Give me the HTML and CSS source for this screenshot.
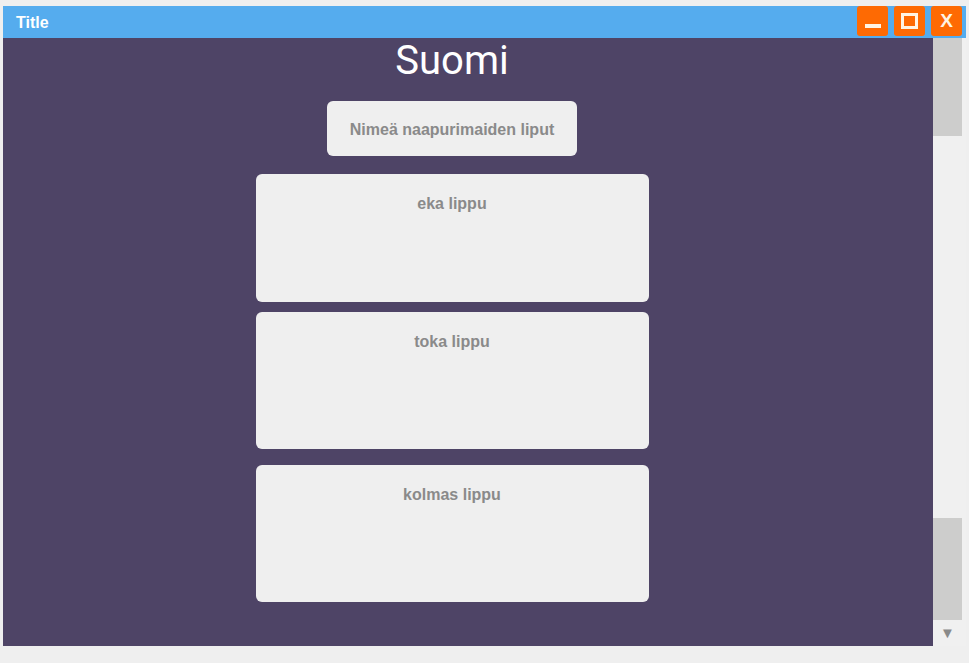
FILE: index.html
```html
<!DOCTYPE html>
<html lang="fi">
<head>
<meta charset="utf-8">
<title>Title</title>
<link rel="stylesheet" href="styles.css">
</head>
<body>
<div class="window">
  <div class="titlebar">
    <span class="title">Title</span>
    <div class="controls">
      <div class="ctl"><span class="min-bar"></span></div>
      <div class="ctl"><span class="max-box"></span></div>
      <div class="ctl"><span class="close-x">X</span></div>
    </div>
  </div>
  <div class="body">
    <div class="content">
      <h1 class="heading">Suomi</h1>
      <div class="prompt">Nimeä naapurimaiden liput</div>
      <div class="card card-a">eka lippu</div>
      <div class="card card-b">toka lippu</div>
      <div class="card card-c">kolmas lippu</div>
    </div>
    <div class="scrollbar">
      <div class="thumb thumb-top"></div>
      <div class="track-gap"></div>
      <div class="thumb thumb-bottom"></div>
      <div class="arrow">▼</div>
    </div>
  </div>
</div>
</body>
</html>
```

FILE: styles.css
```css
html, body {
  margin: 0;
  padding: 0;
}
body {
  background: #efefef;
  font-family: "Liberation Sans", Arial, sans-serif;
  width: 969px;
  height: 663px;
  overflow: hidden;
}
.window {
  margin: 6px 0 0 3px;
  width: 963px;
  display: flex;
  flex-direction: column;
}
.titlebar {
  height: 32px;
  background: #55acee;
  display: flex;
  align-items: center;
}
.title {
  color: #ffffff;
  font-size: 16px;
  font-weight: bold;
  padding-left: 13px;
  margin-top: 1px;
}
.controls {
  margin-left: auto;
  align-self: flex-start;
  display: flex;
  gap: 6px;
  margin-right: 4px;
}
.ctl {
  width: 31px;
  height: 30px;
  background: #fe6a03;
  border-radius: 3px;
  display: flex;
  align-items: center;
  justify-content: center;
}
.min-bar {
  width: 16px;
  height: 4px;
  background: #fff4e4;
  margin-top: 10px;
}
.max-box {
  width: 11px;
  height: 10px;
  border: 3px solid #fff4e4;
}
.close-x {
  color: #fff4e4;
  font-size: 19px;
  font-weight: bold;
  line-height: 20px;
}
.body {
  display: flex;
  height: 608px;
}
.content {
  width: 898px;
  padding-right: 32px;
  background: #4e4466;
  display: flex;
  flex-direction: column;
  align-items: center;
}
.heading {
  margin: 0;
  font-family: Roboto, "Liberation Sans", sans-serif;
  font-weight: normal;
  font-size: 40px;
  line-height: 46px;
  color: #ffffff;
}
.prompt {
  margin-top: 17px;
  width: 250px;
  height: 55px;
  background: #efefef;
  border-radius: 6px;
  display: flex;
  align-items: center;
  justify-content: center;
  color: #8a8a8a;
  font-size: 16px;
  font-weight: bold;
  padding-top: 3px;
  box-sizing: border-box;
}
.card {
  width: 393px;
  box-sizing: border-box;
  background: #efefef;
  border-radius: 6px;
  color: #8a8a8a;
  font-size: 16px;
  font-weight: bold;
  text-align: center;
  padding-top: 21px;
}
.card-a {
  margin-top: 18px;
  height: 128px;
}
.card-b {
  margin-top: 10px;
  height: 137px;
}
.card-c {
  margin-top: 16px;
  height: 137px;
}
.scrollbar {
  width: 33px;
  background: #f0f0f0;
  display: flex;
  flex-direction: column;
}
.thumb {
  width: 29px;
  background: #cdcdcc;
}
.thumb-top {
  height: 98px;
}
.track-gap {
  flex: 1;
}
.thumb-bottom {
  height: 102px;
}
.arrow {
  height: 26px;
  width: 29px;
  color: #8a8a8a;
  font-size: 15px;
  text-align: center;
  line-height: 26px;
}
```
